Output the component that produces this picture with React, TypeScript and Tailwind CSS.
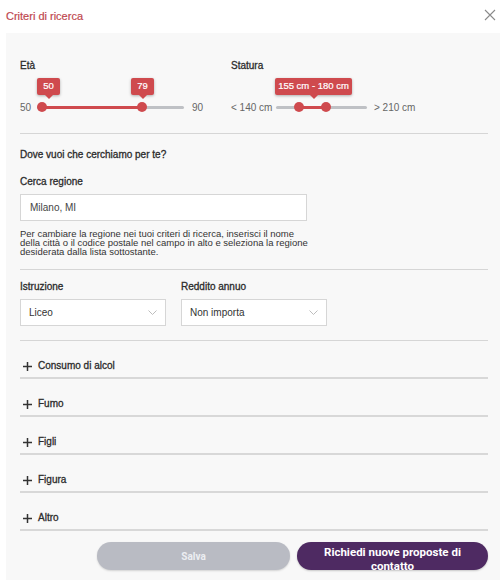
import React from "react";

const red = "bg-[#cf4a4e]";
const label = "h-[12px] leading-[12px] text-[10px] text-[#2b2b2b] [-webkit-text-stroke:0.3px_#2b2b2b]";

function Tip({ text, className }: { text: string; className: string }) {
  return (
    <div
      className={`absolute top-[6px] h-[17px] ${red} rounded-[2px] shadow-[0_1px_3px_rgba(0,0,0,0.3)] flex items-center justify-center text-[9.5px] text-white [-webkit-text-stroke:0.2px_#fff] ${className}`}
    >
      {text}
      <div className="absolute left-1/2 -translate-x-1/2 top-full w-0 h-0 border-x-[4px] border-t-[4px] border-x-transparent border-t-[#cf4a4e]" />
    </div>
  );
}

function Thumb({ left }: { left: string }) {
  return <div className={`absolute top-0 w-[10px] h-[10px] rounded-full ${red} ${left}`} />;
}

function Chevron() {
  return (
    <svg width="9" height="5" viewBox="0 0 9 5" className="mr-[8px]">
      <polyline points="0.5,0.5 4.5,4.5 8.5,0.5" fill="none" stroke="#bdbdbd" strokeWidth="1" />
    </svg>
  );
}

function Select({ value }: { value: string }) {
  return (
    <div className="w-[146px] h-[27px] bg-white border border-[#d6d6d6] flex items-center justify-between pl-[8px] text-[10px] text-[#333]">
      {value}
      <Chevron />
    </div>
  );
}

function Row({ text }: { text: string }) {
  return (
    <div className="h-[38px] pt-[19px] border-b-2 border-[#d8d8d8] flex items-start">
      <div className={`flex items-center pl-[3px] gap-[6px] ${label}`}>
        <svg width="9" height="9" viewBox="0 0 9 9">
          <path d="M4.5 0v9M0 4.5h9" stroke="#333" strokeWidth="1.5" />
        </svg>
        {text}
      </div>
    </div>
  );
}

export default function App() {
  return (
    <div className="w-[500px] h-[586px] bg-white overflow-hidden font-['Liberation_Sans',Arial,sans-serif]">
      {/* header */}
      <div className="h-[33px] flex items-center justify-between pl-[6px] pr-[4px]">
        <span className="text-[11px] text-[#c0474f] [-webkit-text-stroke:0.2px_#c0474f]">Criteri di ricerca</span>
        <svg width="12" height="12" viewBox="0 0 12 12" className="mb-[3px]">
          <path d="M1 1l10 10M11 1L1 11" stroke="#8a8a8a" strokeWidth="1.1" />
        </svg>
      </div>

      <div className="ml-[6px] bg-[#f8f8f8] pl-[14px] pr-[12px] pt-[27px] pb-[10px]">
        {/* sliders */}
        <div className="grid grid-cols-[211px_1fr]">
          <div>
            <div className={label}>Età</div>
            <div className="relative pt-[28px] pb-[2px]">
              <Tip text="50" className="left-[17px] w-[23px]" />
              <Tip text="79" className="left-[111px] w-[23px]" />
              <div className="flex items-center h-[14px] text-[10px] text-[#666]">
                <span className="w-[17px]">50</span>
                <div className="relative w-[147px] h-[10px]">
                  <div className="absolute top-[3.5px] left-0 right-0 h-[3px] bg-[#bfc1c5] rounded-full" />
                  <div className={`absolute top-[3.5px] left-[5px] w-[100px] h-[3px] ${red}`} />
                  <Thumb left="left-0" />
                  <Thumb left="left-[100px]" />
                </div>
                <span className="ml-[8px]">90</span>
              </div>
            </div>
          </div>
          <div>
            <div className={label}>Statura</div>
            <div className="relative pt-[28px] pb-[2px]">
              <Tip text="155 cm - 180 cm" className="left-[44px] w-[77px]" />
              <div className="flex items-center h-[14px] text-[10px] text-[#666]">
                <span className="w-[45px]">&lt; 140 cm</span>
                <div className="relative w-[91px] h-[10px]">
                  <div className="absolute top-[3.5px] left-0 right-0 h-[3px] bg-[#bfc1c5] rounded-full" />
                  <div className={`absolute top-[3.5px] left-[23px] w-[27px] h-[3px] ${red}`} />
                  <Thumb left="left-[18px]" />
                  <Thumb left="left-[45px]" />
                </div>
                <span className="ml-[7px]">&gt; 210 cm</span>
              </div>
            </div>
          </div>
        </div>

        <div className="mt-[17px] h-px bg-[#d6d6d6]" />

        {/* region */}
        <div className={`mt-[15px] ${label}`}>Dove vuoi che cerchiamo per te?</div>
        <div className={`mt-[15px] ${label}`}>Cerca regione</div>
        <div className="mt-[6px] w-[287px] h-[27px] bg-white border border-[#d6d6d6] flex items-center pl-[9px] text-[10px] text-[#444]">
          Milano, MI
        </div>
        <p className="mt-[8px] w-[290px] text-[9.5px] leading-[9px] text-[#333]">
          Per cambiare la regione nei tuoi criteri di ricerca, inserisci il nome della città o il codice postale nel
          campo in alto e seleziona la regione desiderata dalla lista sottostante.
        </p>

        <div className="mt-[13px] h-px bg-[#d6d6d6]" />

        {/* selects */}
        <div className="mt-[11px] flex gap-[15px]">
          <div>
            <div className={label}>Istruzione</div>
            <div className="mt-[6px]">
              <Select value="Liceo" />
            </div>
          </div>
          <div>
            <div className={label}>Reddito annuo</div>
            <div className="mt-[6px]">
              <Select value="Non importa" />
            </div>
          </div>
        </div>

        <div className="mt-[14px] h-px bg-[#d6d6d6]" />

        {["Consumo di alcol", "Fumo", "Figli", "Figura", "Altro"].map((l) => (
          <Row key={l} text={l} />
        ))}

        {/* buttons */}
        <div className="mt-[11px] flex justify-end gap-[7px]">
          <button className="w-[193px] h-[28px] rounded-full bg-[#b9bbc3] text-[10px] font-bold text-[#eceef2] font-['Roboto',sans-serif] shadow-[0_1px_2px_rgba(0,0,0,0.15)]">
            Salva
          </button>
          <button className="w-[191px] h-[28px] rounded-full bg-[#4e2a62] text-[11.5px] leading-[14px] font-bold text-white font-['Roboto',sans-serif] pt-[3px] shadow-[0_1px_2px_rgba(0,0,0,0.2)] flex flex-col items-center justify-start">
            <span>Richiedi nuove proposte di</span>
            <span>contatto</span>
          </button>
        </div>
      </div>
    </div>
  );
}
